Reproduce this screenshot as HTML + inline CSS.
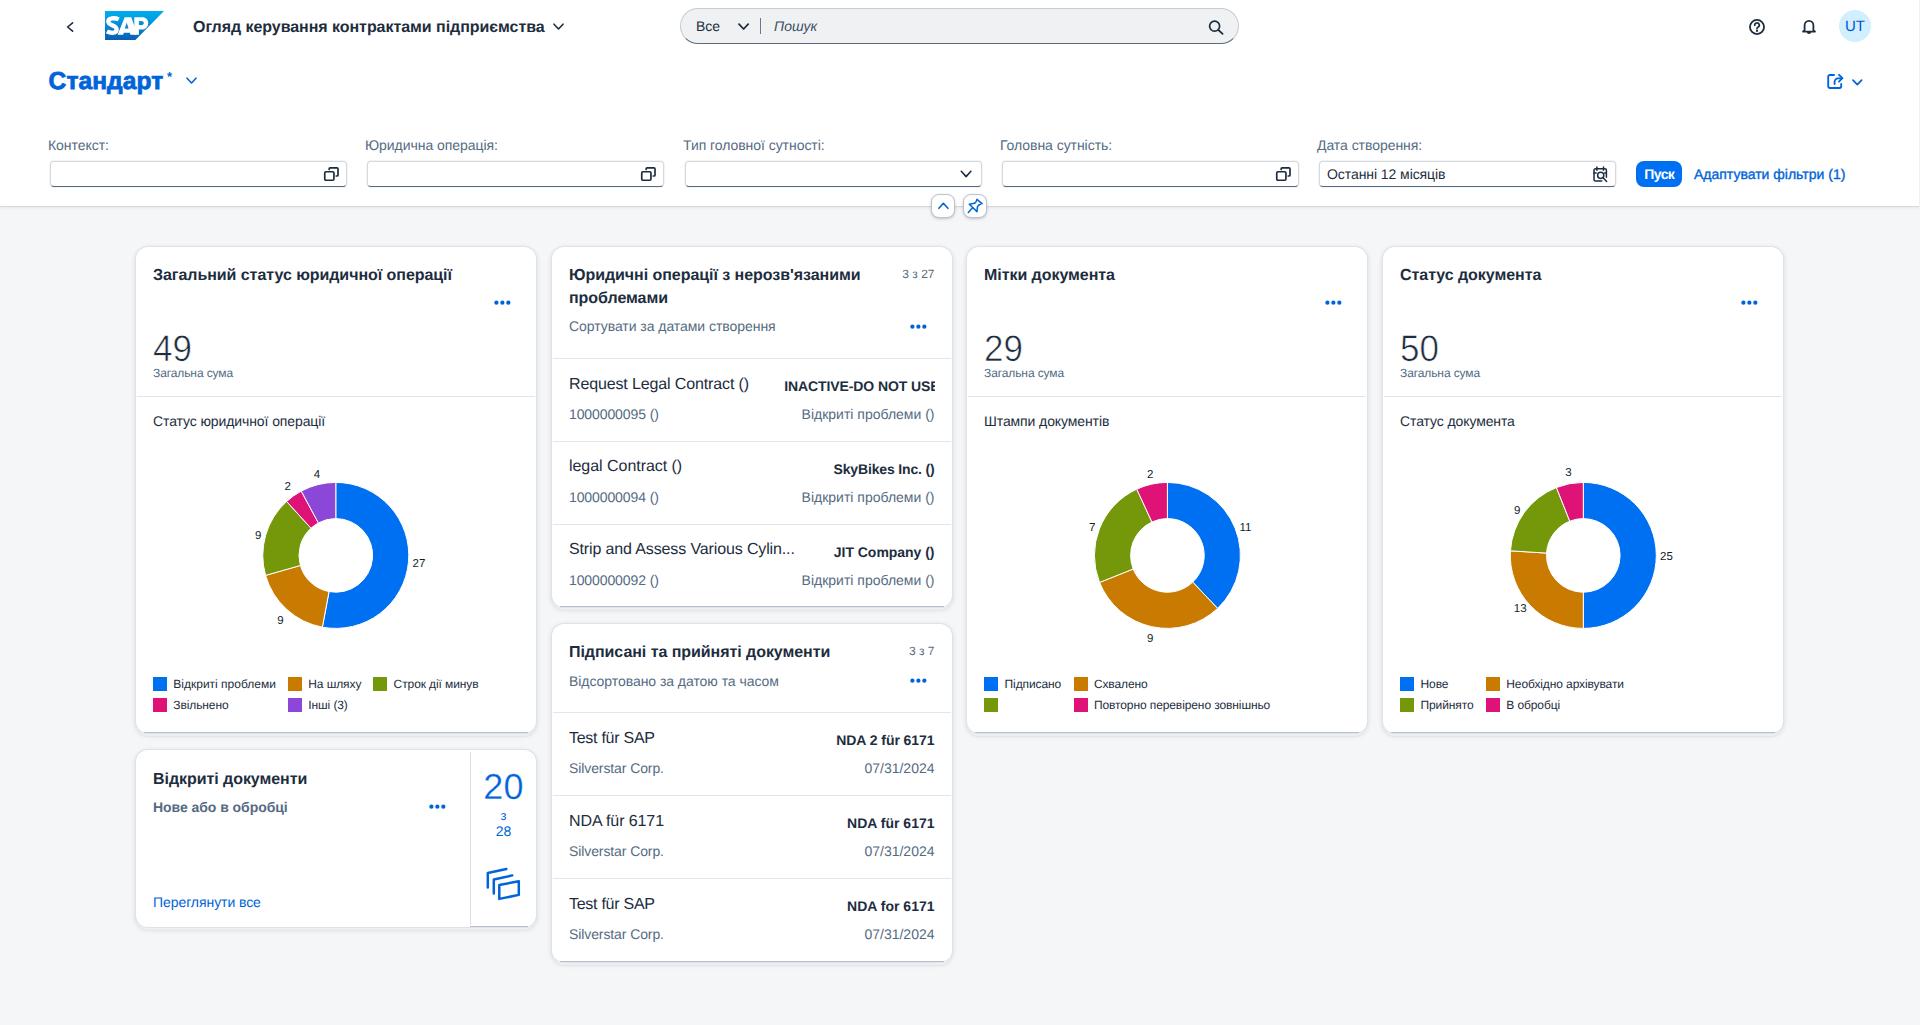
<!DOCTYPE html>
<html lang="uk">
<head>
<meta charset="utf-8">
<title>Огляд керування контрактами підприємства</title>
<style>
*{box-sizing:border-box;margin:0;padding:0}
html,body{width:1920px;height:1025px;overflow:hidden}
body{font-family:"Liberation Sans",sans-serif;font-size:14px;color:#1d2d3e;background:#f5f6f7;position:relative;text-rendering:geometricPrecision}
.abs{position:absolute}
svg{display:block;overflow:visible}
/* ---------- shell ---------- */
#shell{position:absolute;left:0;top:0;width:1919px;height:52px}
#hdr{position:absolute;left:0;top:0;width:1919px;height:206px;background:#fff;box-shadow:0 1px 0 #d5d7da,0 2px 3px rgba(34,53,72,.08)}
.shTitle{position:absolute;left:193px;top:18px;font-weight:bold;font-size:16px;line-height:20px;color:#1d2d3e;white-space:nowrap;letter-spacing:-0.05px}
#search{position:absolute;left:680px;top:8px;width:559px;height:36px;border-radius:18px;background:#eff1f2;border:1px solid #c6ccd2;border-bottom-color:#556b82;box-shadow:inset 0 0 0 0 #000}
.pgTitle{position:absolute;left:48.6px;top:68px;font-weight:bold;font-size:24.5px;line-height:28px;color:#0064d9;white-space:nowrap;-webkit-text-stroke:0.8px #0064d9;letter-spacing:0.1px}
/* ---------- filter bar ---------- */
.flab{position:absolute;top:137px;font-size:14px;line-height:16px;color:#556b82;white-space:nowrap;letter-spacing:-0.05px}
.finp{position:absolute;top:161px;height:26px;width:297px;background:#fff;border:1px solid #d5dadf;border-bottom:1px solid #556b82;border-radius:4px;box-shadow:0 0 0 1px rgba(85,107,130,.08)}
.finp span{position:absolute;left:7px;top:4px;font-size:14px;line-height:16px;color:#1d2d3e;white-space:nowrap;letter-spacing:-0.07px}
.btnGo{position:absolute;left:1636px;top:161px;width:46px;height:26px;border-radius:8px;background:#0070f2;color:#fff;font-weight:bold;font-size:14px;line-height:26px;text-align:center;letter-spacing:-0.6px;text-indent:0.6px}
.lnk{position:absolute;left:1694px;top:166px;font-size:14px;line-height:16px;color:#0064d9;white-space:nowrap;letter-spacing:0;-webkit-text-stroke:0.35px #0064d9}
.rbtn{position:absolute;top:194px;width:24px;height:23.6px;border-radius:8px;background:#fff;border:1px solid #bcc3ca;box-shadow:0 1px 3px rgba(34,53,72,.25)}
/* ---------- cards ---------- */
.card{position:absolute;width:400px;background:#fff;border-radius:12px;box-shadow:0 0 0 1px #dfe3e7,0 3px 0 0 #edeff2,0 4px 0 0 #e2e5e9,0 1px 4px 1px rgba(34,53,72,.10),0 3px 6px rgba(34,53,72,.06)}
.card .bline{position:absolute;left:8px;right:8px;bottom:0;height:1px;background:#b7c0ca}
.ctitle{position:absolute;left:17px;font-weight:bold;font-size:16px;line-height:23px;color:#1d2d3e;white-space:nowrap;letter-spacing:-0.05px}
.csub{position:absolute;left:17px;font-size:14px;line-height:16px;color:#556b82;white-space:nowrap;letter-spacing:-0.05px}
.clip{position:absolute;right:0;top:0;width:150.3px;overflow:hidden;text-align:left;display:block;letter-spacing:-0.1px}
.dots{position:absolute;fill:#0064d9}
.kpi{position:absolute;left:17px;font-size:37px;line-height:40px;color:#1d2d3e;white-space:nowrap;-webkit-text-stroke:0.65px #fff;paint-order:fill stroke;transform:scaleX(0.945);transform-origin:0 0}
.kpil{position:absolute;left:17px;font-size:12px;line-height:14px;color:#556b82;white-space:nowrap;letter-spacing:-0.1px}
.hr{position:absolute;left:1px;right:1px;height:1px;background:#e3e5e7}
.chT{position:absolute;left:17px;font-size:14px;line-height:16px;color:#1d2d3e;white-space:nowrap;letter-spacing:-0.1px}
.lg{position:absolute;font-size:12px;line-height:14px;color:#1d2d3e;white-space:nowrap;letter-spacing:-0.1px}
.sq{position:absolute;width:14px;height:14px}
.cnt{position:absolute;right:17.5px;font-size:12px;line-height:14px;color:#556b82;white-space:nowrap}
.li{position:absolute;left:0;width:400px;height:83px}
.li .t1{position:absolute;left:17px;top:16.5px;font-size:16px;line-height:18px;color:#1d2d3e;white-space:nowrap}
.li .t2{position:absolute;left:17px;top:47px;font-size:14px;line-height:16px;color:#556b82;white-space:nowrap;letter-spacing:-0.1px}
.li .r1{position:absolute;right:17.5px;top:19.3px;font-size:14px;line-height:16px;font-weight:bold;color:#1d2d3e;white-space:nowrap}
.li .r2{position:absolute;right:17.5px;top:47px;font-size:14px;line-height:16px;color:#556b82;white-space:nowrap}
</style>
</head>
<body>
<!-- SHELL BAR -->
<div id="hdr"></div>
<div id="shell">
  <svg class="abs" style="left:66px;top:22px" width="8" height="10" viewBox="0 0 8 10"><path d="M6.6 0.8 L1.6 5 L6.6 9.2" fill="none" stroke="#1d2d3e" stroke-width="1.6" stroke-linecap="round" stroke-linejoin="round"/></svg>
  <svg class="abs" style="left:105px;top:11px" width="59" height="29" viewBox="0 0 59 29">
    <defs><linearGradient id="sapg" x1="0" y1="0" x2="0" y2="1"><stop offset="0" stop-color="#00aeef"/><stop offset="0.25" stop-color="#00a0e3"/><stop offset="1" stop-color="#0b5db3"/></linearGradient></defs>
    <path d="M0 0H59L30.4 29H0Z" fill="url(#sapg)"/>
    <path d="M13.7 8.4C11.6 7.3 9 7.1 6.9 7.4C4.3 7.8 3.2 9.3 3.3 10.8C3.4 12.4 5 13.3 7.8 14.5C10.5 15.7 11.8 16.9 11.7 18.7C11.6 20.6 9.9 21.8 7.6 21.8C5.4 21.8 3.5 21.3 1.9 20.4" fill="none" stroke="#fff" stroke-width="4.3"/>
    <path d="M19.7 6.3H26.2L31.2 19.6V23.8H25.5L24.8 21.7H18.9L18.1 23.8H12.6ZM21.7 11.4L19.8 17.6H23.5Z" fill="#fff" fill-rule="evenodd"/>
    <path d="M29.3 6.3H37.4C41 6.3 43.2 8.8 43.2 12.2C43.2 15.8 40.6 18.5 37 18.5H33.9V23.8H29.3ZM33.9 9.9H36.3C37.9 9.9 38.8 10.7 38.8 11.9C38.8 13.2 37.9 14.1 36.3 14.1H33.9Z" fill="#fff" fill-rule="evenodd"/>
  </svg>
  <div class="shTitle">Огляд керування контрактами підприємства</div>
  <svg class="abs" style="left:553px;top:23px" width="11" height="8" viewBox="0 0 11 8"><path d="M1 1.2 L5.5 6 L10 1.2" fill="none" stroke="#1d2d3e" stroke-width="1.6" stroke-linecap="round" stroke-linejoin="round"/></svg>
  <div id="search">
    <div class="abs" style="left:15px;top:9px;font-size:14px;line-height:16px;color:#1d2d3e">Все</div>
    <svg class="abs" style="left:56.6px;top:14px" width="12" height="8" viewBox="0 0 12 8"><path d="M1 1.1 L5.6 6 L10.2 1.1" fill="none" stroke="#1d2d3e" stroke-width="1.75" stroke-linecap="round" stroke-linejoin="round"/></svg>
    <div class="abs" style="left:78.6px;top:9px;width:1.6px;height:16px;background:#66798d"></div>
    <div class="abs" style="left:93px;top:9px;font-size:14px;line-height:16px;font-style:italic;color:#3b4f64">Пошук</div>
    <svg class="abs" style="left:527px;top:11px" width="16" height="15" viewBox="0 0 16 15"><circle cx="6.6" cy="6.2" r="5" fill="none" stroke="#1d2d3e" stroke-width="1.7"/><path d="M10.4 10 L14.6 13.8" stroke="#1d2d3e" stroke-width="1.8" stroke-linecap="round"/></svg>
  </div>
  <!-- help -->
  <svg class="abs" style="left:1749px;top:18.6px" width="16" height="16" viewBox="0 0 16 16"><circle cx="8" cy="8" r="7.05" fill="none" stroke="#1d2d3e" stroke-width="1.8"/><path d="M5.7 6.3 A2.3 2.2 0 1 1 8.9 8.2 Q8 8.7 8 9.7" fill="none" stroke="#1d2d3e" stroke-width="1.75" stroke-linecap="round"/><circle cx="8" cy="11.9" r="1.05" fill="#1d2d3e"/></svg>
  <!-- bell -->
  <svg class="abs" style="left:1801px;top:19px" width="16" height="16" viewBox="0 0 16 16"><path d="M3.6 11.2 V6.4 A4.4 4.6 0 0 1 12.4 6.4 V11.2 L14 12.6 H2 Z" fill="none" stroke="#1d2d3e" stroke-width="1.8" stroke-linejoin="round"/><path d="M5.8 13 A2.2 2 0 0 0 10.2 13 Z" fill="#1d2d3e"/></svg>
  <!-- avatar -->
  <div class="abs" style="left:1839px;top:10px;width:32px;height:32px;border-radius:50%;background:#d1efff;color:#0057d2;font-size:15px;line-height:34px;text-align:center">UT</div>
</div>

<!-- PAGE HEADER -->
<div class="pgTitle">Стандарт</div>
<div class="abs" style="left:167px;top:70px;font-size:13px;line-height:14px;color:#0064d9;font-weight:bold">*</div>
<svg class="abs" style="left:186px;top:77px" width="11" height="8" viewBox="0 0 11 8"><path d="M1 1.2 L5.5 6 L10 1.2" fill="none" stroke="#0064d9" stroke-width="1.6" stroke-linecap="round" stroke-linejoin="round"/></svg>
<!-- share -->
<svg class="abs" style="left:1827px;top:73px" width="17" height="17" viewBox="0 0 17 17"><path d="M7 2 H2.9 A1.7 1.7 0 0 0 1.2 3.7 V13.3 A1.7 1.7 0 0 0 2.9 15 H12.5 A1.7 1.7 0 0 0 14.2 13.3 V11" fill="none" stroke="#0064d9" stroke-width="1.85" stroke-linecap="round"/><path d="M7.6 11 V8.8 A3.5 3.5 0 0 1 11.1 5.3 H15" fill="none" stroke="#0064d9" stroke-width="1.85" stroke-linecap="round"/><path d="M12 1.8 L15.4 5.2 L12 8.6" fill="none" stroke="#0064d9" stroke-width="1.85" stroke-linecap="round" stroke-linejoin="round"/></svg>
<svg class="abs" style="left:1852px;top:78.5px" width="11" height="8" viewBox="0 0 11 8"><path d="M1 1.1 L5.3 5.6 L9.6 1.1" fill="none" stroke="#0064d9" stroke-width="1.7" stroke-linecap="round" stroke-linejoin="round"/></svg>

<!-- FILTER BAR -->
<div class="flab" style="left:48px">Контекст:</div>
<div class="flab" style="left:365px">Юридична операція:</div>
<div class="flab" style="left:683px">Тип головної сутності:</div>
<div class="flab" style="left:1000px">Головна сутність:</div>
<div class="flab" style="left:1317px">Дата створення:</div>
<div class="finp" style="left:50px"><svg class="abs" style="left:272px;top:4px" width="17" height="16" viewBox="0 0 17 16"><g fill="none" stroke="#1d2d3e" stroke-width="1.7" stroke-linecap="round"><rect x="1.75" y="5.75" width="9.2" height="8.5" rx="1.2"/><path d="M6.2 3.5V2.9Q6.2 1.9 7.2 1.9H14Q15 1.9 15 2.9V9Q15 10 14 10H13.3"/></g></svg></div>
<div class="finp" style="left:367px"><svg class="abs" style="left:272px;top:4px" width="17" height="16" viewBox="0 0 17 16"><g fill="none" stroke="#1d2d3e" stroke-width="1.7" stroke-linecap="round"><rect x="1.75" y="5.75" width="9.2" height="8.5" rx="1.2"/><path d="M6.2 3.5V2.9Q6.2 1.9 7.2 1.9H14Q15 1.9 15 2.9V9Q15 10 14 10H13.3"/></g></svg></div>
<div class="finp" style="left:685px"><svg class="abs" style="left:273.5px;top:8px" width="13" height="9" viewBox="0 0 13 9"><path d="M1.3 1.3L6.1 6.6L10.9 1.3" fill="none" stroke="#1d2d3e" stroke-width="1.6" stroke-linecap="round" stroke-linejoin="round"/></svg></div>
<div class="finp" style="left:1002px"><svg class="abs" style="left:272px;top:4px" width="17" height="16" viewBox="0 0 17 16"><g fill="none" stroke="#1d2d3e" stroke-width="1.7" stroke-linecap="round"><rect x="1.75" y="5.75" width="9.2" height="8.5" rx="1.2"/><path d="M6.2 3.5V2.9Q6.2 1.9 7.2 1.9H14Q15 1.9 15 2.9V9Q15 10 14 10H13.3"/></g></svg></div>
<div class="finp" style="left:1319px"><span>Останні 12 місяців</span><svg class="abs" style="left:272px;top:3px" width="17" height="18" viewBox="0 0 17 18"><g fill="none" stroke="#1d2d3e" stroke-width="1.5" stroke-linecap="round"><path d="M9.8 15.9H3.5Q2 15.9 2 14.4V5.3Q2 3.8 3.5 3.8H12.9Q14.4 3.8 14.4 5.3V12.3"/><path d="M4.9 2V5.2M11.5 2V5.2M2 7.9H4.2M12.7 7.9H14.4"/><circle cx="8.7" cy="10.3" r="3.1"/><path d="M11.1 12.7L14.6 16.4"/></g></svg></div>
<div class="btnGo">Пуск</div>
<div class="lnk">Адаптувати фільтри (1)</div>
<div class="rbtn" style="left:930.6px"><svg class="abs" style="left:0;top:0" width="22" height="22" viewBox="0 0 22 22"><path d="M6.9 13.3L11.4 8.3L15.9 13.3" fill="none" stroke="#0064d9" stroke-width="1.6" stroke-linecap="round" stroke-linejoin="round"/></svg></div>
<div class="rbtn" style="left:962.6px"><svg class="abs" style="left:0;top:0" width="22" height="22" viewBox="0 0 22 22"><g fill="none" stroke="#0064d9" stroke-width="1.5" stroke-linecap="round" stroke-linejoin="round"><path d="M4.3 17.4L8.6 12.8"/><path d="M12.9 4.3L18.1 8.6"/><path d="M12.6 5.3Q12.1 7.4 10.4 8.3L5.3 9.3L13 16.6L13.5 11.6Q14.3 9.8 16.6 9.3"/></g></svg></div>

<!-- CARDS -->
<div class="card" id="c1" style="left:136px;top:247px;height:486px">
<div class="ctitle" style="top:17px">Загальний статус юридичної операції</div>
<svg class="dots" style="left:358px;top:53px" width="17" height="6" viewBox="0 0 17 6"><circle cx="2.4" cy="2.65" r="2.12"/><circle cx="8.37" cy="2.65" r="2.12"/><circle cx="14.34" cy="2.65" r="2.12"/></svg>
<div class="kpi" style="top:82.3px">49</div>
<div class="kpil" style="top:119px">Загальна сума</div>
<div class="hr" style="top:149px"></div>
<div class="chT" style="top:166px">Статус юридичної операції</div>
<svg class="abs" style="left:0;top:0" width="400" height="486" viewBox="0 0 400 486">
<path d="M199.80 235.40A73.0 73.0 0 1 1 186.39 380.16L193.04 344.57A36.8 36.8 0 1 0 199.80 271.60Z" fill="#0070f2" stroke="#fff" stroke-width="1" stroke-linejoin="round"/>
<path d="M186.39 380.16A73.0 73.0 0 0 1 129.59 328.38L164.40 318.47A36.8 36.8 0 0 0 193.04 344.57Z" fill="#c87b00" stroke="#fff" stroke-width="1" stroke-linejoin="round"/>
<path d="M129.59 328.38A73.0 73.0 0 0 1 150.62 254.45L175.01 281.20A36.8 36.8 0 0 0 164.40 318.47Z" fill="#75980b" stroke="#fff" stroke-width="1" stroke-linejoin="round"/>
<path d="M150.62 254.45A73.0 73.0 0 0 1 165.26 244.09L182.39 275.98A36.8 36.8 0 0 0 175.01 281.20Z" fill="#df1278" stroke="#fff" stroke-width="1" stroke-linejoin="round"/>
<path d="M165.26 244.09A73.0 73.0 0 0 1 199.80 235.40L199.80 271.60A36.8 36.8 0 0 0 182.39 275.98Z" fill="#8b47d7" stroke="#fff" stroke-width="1" stroke-linejoin="round"/>
<g font-family="Liberation Sans, sans-serif" font-size="11.5" fill="#131e29" text-anchor="middle">
<text x="180.9" y="230.9">4</text>
<text x="151.8" y="243.2">2</text>
<text x="122.1" y="292.0">9</text>
<text x="144.4" y="376.5">9</text>
<text x="283" y="319.9">27</text>
</g></svg>
<div class="sq" style="left:17px;top:430px;background:#0070f2"></div>
<div class="lg" style="left:37.3px;top:430px;letter-spacing:0">Відкриті проблеми</div>
<div class="sq" style="left:152px;top:430px;background:#c87b00"></div>
<div class="lg" style="left:172.3px;top:430px">На шляху</div>
<div class="sq" style="left:237.3px;top:430px;background:#75980b"></div>
<div class="lg" style="left:257.6px;top:430px">Строк дії минув</div>
<div class="sq" style="left:17px;top:451px;background:#df1278"></div>
<div class="lg" style="left:37.3px;top:451px">Звільнено</div>
<div class="sq" style="left:152px;top:451px;background:#8b47d7"></div>
<div class="lg" style="left:172.3px;top:451px">Інші (3)</div>
<div class="bline"></div>
</div><!--/c1-->
<div class="card" id="c5" style="left:136px;top:750px;height:177px">
<div class="ctitle" style="top:18px">Відкриті документи</div>
<div class="csub" style="top:49px;font-weight:bold">Нове або в обробці</div>
<svg class="dots" style="left:293px;top:54px" width="17" height="6" viewBox="0 0 17 6"><circle cx="2.4" cy="2.65" r="2.12"/><circle cx="8.37" cy="2.65" r="2.12"/><circle cx="14.34" cy="2.65" r="2.12"/></svg>
<div class="abs" style="left:17px;top:143.7px;font-size:14px;line-height:16px;color:#0064d9;white-space:nowrap;letter-spacing:-0.07px">Переглянути все</div>
<div class="abs" style="left:334px;top:2px;width:1px;height:173px;background:#dcdfe3"></div>
<div class="abs" style="left:335px;top:17.4px;width:65px;text-align:center;font-size:36px;line-height:40px;color:#0064d9;-webkit-text-stroke:0.3px #fff;paint-order:fill stroke;letter-spacing:0.2px">20</div>
<div class="abs" style="left:335px;top:58.5px;width:65px;text-align:center;font-size:13px;line-height:14px;color:#0064d9">з</div>
<div class="abs" style="left:335px;top:73px;width:65px;text-align:center;font-size:14px;line-height:16px;color:#0064d9">28</div>
<svg class="abs" style="left:349px;top:117px" width="36" height="34" viewBox="0 0 36 34"><g fill="none" stroke="#0064d9" stroke-width="2.5" stroke-linecap="round" stroke-linejoin="round"><path d="M21.4 2 L2.8 6 V20.4"/><path d="M27.3 8.4 L8.8 12.5 V26.4"/><path d="M14.3 18 L33.8 14.3 V27.9 L14.3 31.9 Z"/></g></svg>
<div class="bline" style="left:334px;right:8px"></div>
</div><!--/c5-->
<div class="card" id="c2" style="left:552px;top:247px;height:360px">
<div class="ctitle" style="top:17.4px">Юридичні операції з нерозв'язаними<br>проблемами</div>
<div class="cnt" style="top:19.5px">3 з 27</div>
<div class="csub" style="top:71px">Сортувати за датами створення</div>
<svg class="dots" style="left:358.3px;top:76.5px" width="17" height="6" viewBox="0 0 17 6"><circle cx="2.4" cy="2.65" r="2.12"/><circle cx="8.37" cy="2.65" r="2.12"/><circle cx="14.34" cy="2.65" r="2.12"/></svg>
<div class="hr" style="top:111.1px"></div>
<div class="li" style="top:112.1px"><div class="t1" style="letter-spacing:-0.13px">Request Legal Contract ()</div><div class="t2">1000000095 ()</div><div class="r1" style="letter-spacing:0px"><span class="clip">INACTIVE-DO NOT USE</span></div><div class="r2">Відкриті проблеми ()</div></div>
<div class="hr" style="top:193.85px"></div>
<div class="li" style="top:194.85px"><div class="t1" style="letter-spacing:-0.04px">legal Contract ()</div><div class="t2">1000000094 ()</div><div class="r1" style="letter-spacing:-0.16px">SkyBikes Inc. ()</div><div class="r2">Відкриті проблеми ()</div></div>
<div class="hr" style="top:276.6px"></div>
<div class="li" style="top:277.6px"><div class="t1" style="letter-spacing:-0.13px">Strip and Assess Various Cylin...</div><div class="t2">1000000092 ()</div><div class="r1" style="letter-spacing:-0.03px">JIT Company ()</div><div class="r2">Відкриті проблеми ()</div></div>
<div class="bline"></div>
</div><!--/c2-->
<div class="card" id="c6" style="left:552px;top:624px;height:338px">
<div class="ctitle" style="top:17.4px">Підписані та прийняті документи</div>
<div class="cnt" style="top:19.5px">3 з 7</div>
<div class="csub" style="top:49px">Відсортовано за датою та часом</div>
<svg class="dots" style="left:358.3px;top:54px" width="17" height="6" viewBox="0 0 17 6"><circle cx="2.4" cy="2.65" r="2.12"/><circle cx="8.37" cy="2.65" r="2.12"/><circle cx="14.34" cy="2.65" r="2.12"/></svg>
<div class="hr" style="top:88px"></div>
<div class="li" style="top:89px"><div class="t1" style="letter-spacing:-0.27px">Test für SAP</div><div class="t2">Silverstar Corp.</div><div class="r1" style="letter-spacing:-0.06px">NDA 2 für 6171</div><div class="r2">07/31/2024</div></div>
<div class="hr" style="top:171px"></div>
<div class="li" style="top:172px"><div class="t1" style="letter-spacing:-0.09px">NDA für 6171</div><div class="t2">Silverstar Corp.</div><div class="r1" style="letter-spacing:0px">NDA für 6171</div><div class="r2">07/31/2024</div></div>
<div class="hr" style="top:254px"></div>
<div class="li" style="top:255px"><div class="t1" style="letter-spacing:-0.27px">Test für SAP</div><div class="t2">Silverstar Corp.</div><div class="r1" style="letter-spacing:0px">NDA for 6171</div><div class="r2">07/31/2024</div></div>
<div class="bline"></div>
</div><!--/c6-->
<div class="card" id="c3" style="left:967px;top:247px;height:486px">
<div class="ctitle" style="top:17px">Мітки документа</div>
<svg class="dots" style="left:358px;top:53px" width="17" height="6" viewBox="0 0 17 6"><circle cx="2.4" cy="2.65" r="2.12"/><circle cx="8.37" cy="2.65" r="2.12"/><circle cx="14.34" cy="2.65" r="2.12"/></svg>
<div class="kpi" style="top:82.3px">29</div>
<div class="kpil" style="top:119px">Загальна сума</div>
<div class="hr" style="top:149px"></div>
<div class="chT" style="top:166px">Штампи документів</div>
<svg class="abs" style="left:0;top:0" width="400" height="486" viewBox="0 0 400 486">
<path d="M200.40 235.40A73.0 73.0 0 0 1 250.60 361.40L225.71 335.12A36.8 36.8 0 0 0 200.40 271.60Z" fill="#0070f2" stroke="#fff" stroke-width="1" stroke-linejoin="round"/>
<path d="M250.60 361.40A73.0 73.0 0 0 1 132.58 335.42L166.21 322.02A36.8 36.8 0 0 0 225.71 335.12Z" fill="#c87b00" stroke="#fff" stroke-width="1" stroke-linejoin="round"/>
<path d="M132.58 335.42A73.0 73.0 0 0 1 169.75 242.15L184.95 275.00A36.8 36.8 0 0 0 166.21 322.02Z" fill="#75980b" stroke="#fff" stroke-width="1" stroke-linejoin="round"/>
<path d="M169.75 242.15A73.0 73.0 0 0 1 200.40 235.40L200.40 271.60A36.8 36.8 0 0 0 184.95 275.00Z" fill="#df1278" stroke="#fff" stroke-width="1" stroke-linejoin="round"/>
<g font-family="Liberation Sans, sans-serif" font-size="11.5" fill="#131e29" text-anchor="middle">
<text x="183.3" y="230.8">2</text>
<text x="278.4" y="284.3">11</text>
<text x="125.3" y="284.3">7</text>
<text x="183.3" y="394.7">9</text>
</g></svg>
<div class="sq" style="left:17.3px;top:430px;background:#0070f2"></div>
<div class="lg" style="left:37.6px;top:430px">Підписано</div>
<div class="sq" style="left:106.6px;top:430px;background:#c87b00"></div>
<div class="lg" style="left:126.89999999999999px;top:430px">Схвалено</div>
<div class="sq" style="left:17.3px;top:451px;background:#75980b"></div>
<div class="sq" style="left:106.6px;top:451px;background:#df1278"></div>
<div class="lg" style="left:126.89999999999999px;top:451px">Повторно перевірено зовнішньо</div>
<div class="bline"></div>
</div><!--/c3-->
<div class="card" id="c4" style="left:1383px;top:247px;height:486px">
<div class="ctitle" style="top:17px">Статус документа</div>
<svg class="dots" style="left:358px;top:53px" width="17" height="6" viewBox="0 0 17 6"><circle cx="2.4" cy="2.65" r="2.12"/><circle cx="8.37" cy="2.65" r="2.12"/><circle cx="14.34" cy="2.65" r="2.12"/></svg>
<div class="kpi" style="top:82.3px">50</div>
<div class="kpil" style="top:119px">Загальна сума</div>
<div class="hr" style="top:149px"></div>
<div class="chT" style="top:166px">Статус документа</div>
<svg class="abs" style="left:0;top:0" width="400" height="486" viewBox="0 0 400 486">
<path d="M200.30 235.40A73.0 73.0 0 0 1 200.30 381.40L200.30 345.20A36.8 36.8 0 0 0 200.30 271.60Z" fill="#0070f2" stroke="#fff" stroke-width="1" stroke-linejoin="round"/>
<path d="M200.30 381.40A73.0 73.0 0 0 1 127.44 303.82L163.57 306.09A36.8 36.8 0 0 0 200.30 345.20Z" fill="#c87b00" stroke="#fff" stroke-width="1" stroke-linejoin="round"/>
<path d="M127.44 303.82A73.0 73.0 0 0 1 173.43 240.53L186.75 274.18A36.8 36.8 0 0 0 163.57 306.09Z" fill="#75980b" stroke="#fff" stroke-width="1" stroke-linejoin="round"/>
<path d="M173.43 240.53A73.0 73.0 0 0 1 200.30 235.40L200.30 271.60A36.8 36.8 0 0 0 186.75 274.18Z" fill="#df1278" stroke="#fff" stroke-width="1" stroke-linejoin="round"/>
<g font-family="Liberation Sans, sans-serif" font-size="11.5" fill="#131e29" text-anchor="middle">
<text x="185.5" y="229.3">3</text>
<text x="134.2" y="267.4">9</text>
<text x="283.5" y="312.7">25</text>
<text x="137.2" y="365.4">13</text>
</g></svg>
<div class="sq" style="left:17.2px;top:430px;background:#0070f2"></div>
<div class="lg" style="left:37.5px;top:430px">Нове</div>
<div class="sq" style="left:103px;top:430px;background:#c87b00"></div>
<div class="lg" style="left:123.3px;top:430px">Необхідно архівувати</div>
<div class="sq" style="left:17.2px;top:451px;background:#75980b"></div>
<div class="lg" style="left:37.5px;top:451px">Прийнято</div>
<div class="sq" style="left:103px;top:451px;background:#df1278"></div>
<div class="lg" style="left:123.3px;top:451px">В обробці</div>
<div class="bline"></div>
</div><!--/c4-->
</body>
</html>
